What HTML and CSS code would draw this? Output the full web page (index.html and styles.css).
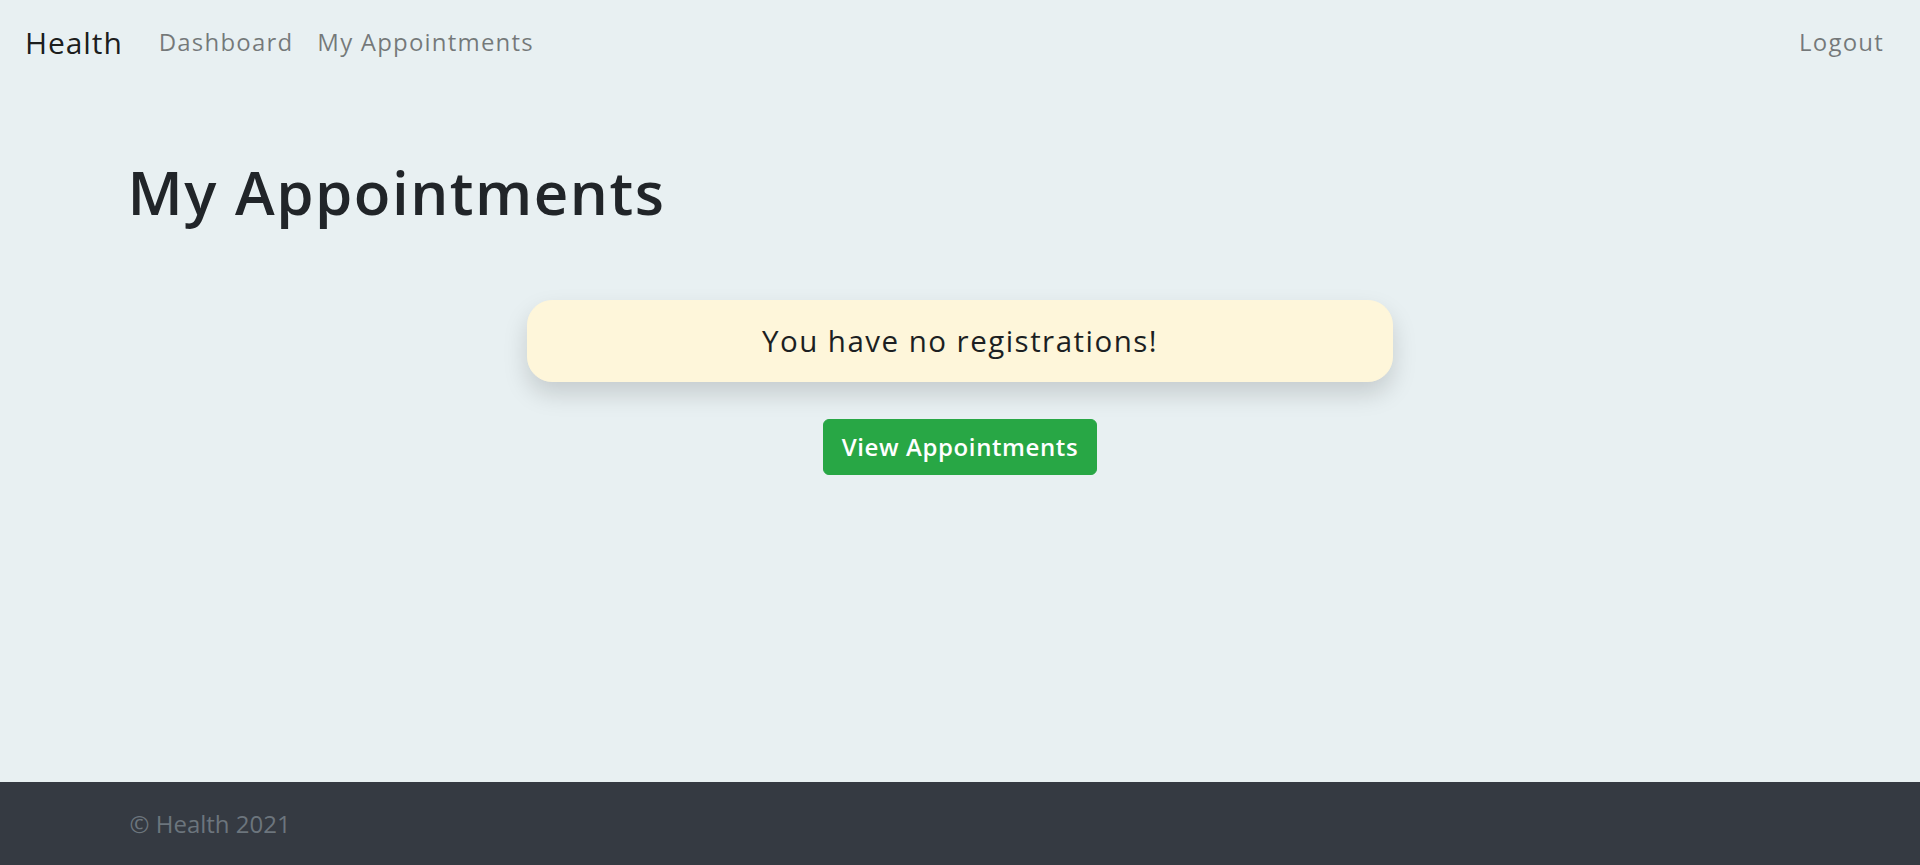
FILE: index.html
```html
<!DOCTYPE html>
<html lang="en">
<head>
<meta charset="utf-8">
<title>My Appointments</title>
<link rel="stylesheet" href="styles.css">
</head>
<body>
<nav class="navbar">
  <a class="brand" href="#">Health</a>
  <ul class="nav">
    <li><a class="nav-link" href="#">Dashboard</a></li>
    <li><a class="nav-link" href="#">My Appointments</a></li>
  </ul>
  <ul class="nav nav-right">
    <li><a class="nav-link" href="#">Logout</a></li>
  </ul>
</nav>
<main class="main">
  <div class="container">
    <h1 class="title">My Appointments</h1>
    <div class="alert">You have no registrations!</div>
    <div class="actions">
      <a class="btn" href="#">View Appointments</a>
    </div>
  </div>
</main>
<footer class="footer">
  <div class="container">
    <span class="footer-text">© Health 2021</span>
  </div>
</footer>
</body>
</html>
```
FILE: styles.css
```css
* { box-sizing: border-box; }
html, body { margin: 0; padding: 0; }
body {
  min-height: 100vh;
  display: flex;
  flex-direction: column;
  background: #e8f0f2;
  font-family: "Open Sans", "Liberation Sans", sans-serif;
  color: #212529;
}
a { text-decoration: none; }
.navbar {
  display: flex;
  align-items: center;
  padding: 12px 24px;
}
.brand {
  font-size: 30px;
  line-height: 45px;
  padding: 7.5px 0 7.5px 1px;
  margin-right: 24px;
  color: rgba(0,0,0,.9);
  letter-spacing: 0.03em;
}
.nav {
  display: flex;
  list-style: none;
  margin: 0;
  padding: 0;
}
.nav-right { margin-left: auto; }
.nav-link {
  display: block;
  padding: 12px 12px;
  font-size: 24px;
  line-height: 36px;
  color: rgba(0,0,0,.5);
  letter-spacing: 0.05em;
}
.main { flex: 1 0 auto; }
.container {
  max-width: 1710px;
  margin: 0 auto;
  padding: 0 22.5px;
}
.title {
  margin: 72px 0 12px;
  font-size: 60px;
  line-height: 72px;
  font-weight: 600;
  letter-spacing: 0.025em;
}
.alert {
  width: 866px;
  margin: 72px auto 0;
  padding: 18px 30px;
  border: 1.5px solid #fef6da;
  border-radius: 25px;
  background: #fef6da;
  box-shadow: 0 12px 24px rgba(0,0,0,.15);
  text-align: center;
  font-size: 29.5px;
  line-height: 44px;
  color: #1c1f22;
  letter-spacing: 0.05em;
}
.actions {
  text-align: center;
  margin-top: 37px;
}
.btn {
  display: inline-block;
  padding: 9px 18px;
  font-size: 24px;
  line-height: 36px;
  font-weight: 600;
  color: #fff;
  background: #28a745;
  border: 1.5px solid #28a745;
  border-radius: 6px;
  letter-spacing: 0.025em;
}
.footer {
  background: #353a42;
  padding: 23.5px 0;
}
.footer-text {
  display: inline-block;
  padding-left: 2px;
  font-size: 24px;
  line-height: 36px;
  color: #6c757d;
  letter-spacing: 0;
}
```
